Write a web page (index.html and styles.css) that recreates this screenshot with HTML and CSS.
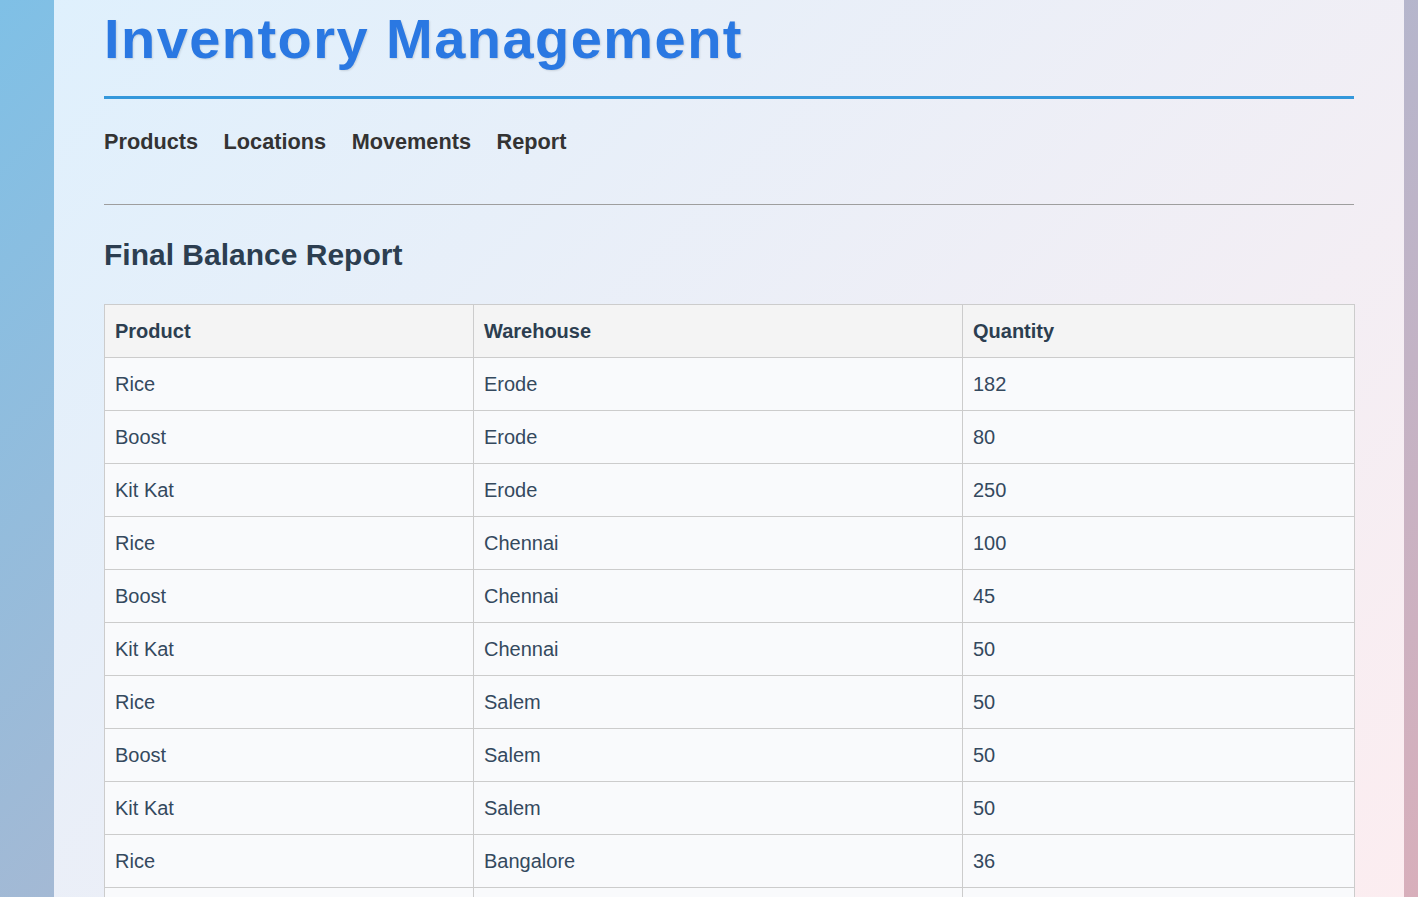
FILE: index.html
```html
<!DOCTYPE html>
<html lang="en">
<head>
<meta charset="utf-8">
<title>Inventory Management</title>
<link rel="stylesheet" href="styles.css">
</head>
<body>
<div class="container">
  <header class="header">
    <h1 class="title">Inventory Management</h1>
  </header>
  <nav class="nav">
    <a class="nav-link" href="#">Products</a>
    <a class="nav-link" href="#">Locations</a>
    <a class="nav-link" href="#">Movements</a>
    <a class="nav-link" href="#">Report</a>
  </nav>
  <hr class="divider">
  <h2 class="section-title">Final Balance Report</h2>
  <table class="report">
    <colgroup>
      <col class="c1"><col class="c2"><col class="c3">
    </colgroup>
    <thead>
      <tr><th>Product</th><th>Warehouse</th><th>Quantity</th></tr>
    </thead>
    <tbody>
      <tr><td>Rice</td><td>Erode</td><td>182</td></tr>
      <tr><td>Boost</td><td>Erode</td><td>80</td></tr>
      <tr><td>Kit Kat</td><td>Erode</td><td>250</td></tr>
      <tr><td>Rice</td><td>Chennai</td><td>100</td></tr>
      <tr><td>Boost</td><td>Chennai</td><td>45</td></tr>
      <tr><td>Kit Kat</td><td>Chennai</td><td>50</td></tr>
      <tr><td>Rice</td><td>Salem</td><td>50</td></tr>
      <tr><td>Boost</td><td>Salem</td><td>50</td></tr>
      <tr><td>Kit Kat</td><td>Salem</td><td>50</td></tr>
      <tr><td>Rice</td><td>Bangalore</td><td>36</td></tr>
      <tr><td>Boost</td><td>Bangalore</td><td>20</td></tr>
      <tr><td>Kit Kat</td><td>Bangalore</td><td>30</td></tr>
    </tbody>
  </table>
</div>
</body>
</html>
```

FILE: styles.css
```css
html {
  background: linear-gradient(135deg, #7fc0e6 0%, #d8afbb 100%) fixed;
  min-height: 100%;
}

body {
  margin: 0;
  font-family: "Liberation Sans", Arial, sans-serif;
}

.container {
  margin: 0 14px 0 54px;
  padding: 7px 50px 40px;
  background: linear-gradient(135deg, #def0fd 0%, #fcedf0 100%) fixed;
}

.header {
  padding-bottom: 25px;
  border-bottom: 3px solid #3498db;
}

.title {
  margin: 0;
  font-size: 56px;
  line-height: 64px;
  font-weight: bold;
  letter-spacing: 1.45px;
  color: #2a78e2;
  text-shadow: 1px 1px 2px rgba(0, 0, 0, 0.12);
}

.nav {
  display: flex;
  gap: 25.6px;
  margin-top: 30px;
  line-height: 25px;
}

.nav-link {
  font-size: 21.7px;
  font-weight: bold;
  color: #333333;
  text-decoration: none;
}

.divider {
  margin: 50px 0 0;
  border: 0;
  border-top: 1px solid #9e9e9e;
  height: 0;
}

.section-title {
  margin: 33px 0 0;
  font-size: 30px;
  line-height: 34px;
  font-weight: bold;
  color: #2c3e50;
}

.report {
  margin-top: 32px;
  width: 100%;
  table-layout: fixed;
  border-collapse: collapse;
  font-size: 20px;
}

.c1 { width: 369px; }
.c2 { width: 489px; }
.c3 { width: 392px; }

.report th,
.report td {
  border: 1px solid #cccccc;
  padding: 15px 10px;
  line-height: 22px;
  text-align: left;
}

.report th {
  background: #f4f4f4;
  color: #2c3e50;
  font-weight: bold;
}

.report td {
  background: #f9fafc;
  color: #34495e;
}
```
